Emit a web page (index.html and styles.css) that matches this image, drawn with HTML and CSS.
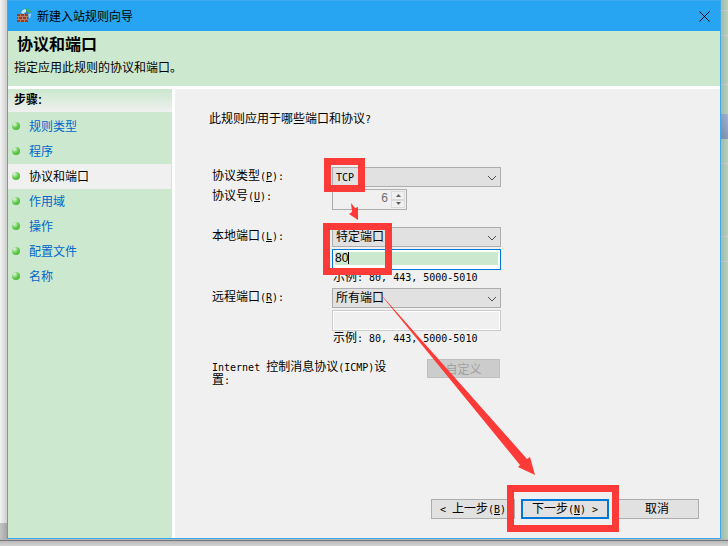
FILE: index.html
```html
<!DOCTYPE html>
<html lang="zh-CN">
<head>
<meta charset="utf-8">
<title>新建入站规则向导</title>
<link rel="stylesheet" href="styles.css">
</head>
<body>
<div class="desktop">
  <div class="edge edge-left"></div>
  <main class="window">
    <header class="titlebar">
      <svg class="app-icon" viewBox="0 0 16 16" aria-hidden="true">
        <circle cx="10" cy="6" r="5.500" fill="#2a7fd0"/>
        <path d="M5 5 Q6 1 10 1 L10 4 L7 6Z" fill="#c4ecff"/>
        <path d="M9 1 Q13 0 15 4 L13 5 L11 3Z" fill="#49b845"/>
        <path d="M12 6 15 5 Q16 8 13 11Z" fill="#7fd0f5"/>
        <path d="M1 6H12V14H1Z" fill="#8f3f2e"/>
        <path d="M1 8.500H12M1 11.500H12M4.500 6V8M8.500 6V8M2.500 9V11M6.500 9V11M10.500 9V11M4.500 12V14M8.500 12V14" stroke="#c98a72" stroke-width=".8" fill="none"/>
      </svg>
      <span class="title">新建入站规则向导</span>
      <button class="close" type="button" aria-label="关闭">
        <svg viewBox="0 0 11 11" aria-hidden="true"><path d="M.5.5 10.500 10.500M10.500.5.5 10.500"/></svg>
      </button>
    </header>
    <section class="banner">
      <h1>协议和端口</h1>
      <p>指定应用此规则的协议和端口。</p>
    </section>
    <div class="body">
      <nav class="steps">
        <h2>步骤:</h2>
        <ul>
          <li><a href="#type">规则类型</a></li>
          <li><a href="#program">程序</a></li>
          <li class="current"><a href="#ports" aria-current="step">协议和端口</a></li>
          <li><a href="#scope">作用域</a></li>
          <li><a href="#action">操作</a></li>
          <li><a href="#profile">配置文件</a></li>
          <li><a href="#name">名称</a></li>
        </ul>
      </nav>
      <form class="page">
        <p class="question">此规则应用于哪些端口和协议<span class="en">?</span></p>
        <div class="group protocol">
          <label for="protocol">协议类型<span class="en">(<u>P</u>):</span></label>
          <div class="pick"><select id="protocol" class="latin"><option>TCP</option></select><svg viewBox="0 0 10 6" aria-hidden="true"><path d="M1 1 5 5 9 1"/></svg></div>
          <label for="number">协议号<span class="en">(<u>U</u>):</span></label>
          <div class="spinner">
            <input id="number" type="text" value="6" disabled>
            <div class="arrows">
              <button type="button" disabled aria-label="增加"><svg viewBox="0 0 5 3" aria-hidden="true"><path d="M0 3 2.500 0 5 3Z"/></svg></button>
              <button type="button" disabled aria-label="减少"><svg viewBox="0 0 5 3" aria-hidden="true"><path d="M0 0 2.500 3 5 0Z"/></svg></button>
            </div>
          </div>
        </div>
        <div class="group local">
          <label for="local">本地端口<span class="en">(<u>L</u>):</span></label>
          <div class="pick"><select id="local"><option>特定端口</option></select><svg viewBox="0 0 10 6" aria-hidden="true"><path d="M1 1 5 5 9 1"/></svg></div>
          <div class="field active"><input type="text" value="80" size="1" aria-label="本地端口号"></div>
          <p class="hint">示例<span class="en">: 80, 443, 5000-5010</span></p>
        </div>
        <div class="group remote">
          <label for="remote">远程端口<span class="en">(<u>R</u>):</span></label>
          <div class="pick"><select id="remote"><option>所有端口</option></select><svg viewBox="0 0 10 6" aria-hidden="true"><path d="M1 1 5 5 9 1"/></svg></div>
          <div class="field off"><input type="text" size="1" disabled aria-label="远程端口号"></div>
          <p class="hint">示例<span class="en">: 80, 443, 5000-5010</span></p>
        </div>
        <div class="icmp">
          <p><span class="en">Internet </span>控制消息协议<span class="en">(ICMP)</span>设置<span class="en">:</span></p>
          <button type="button" disabled>自定义</button>
        </div>
        <footer class="actions">
          <button type="button"><span class="en">&lt; </span>上一步<span class="en">(<u>B</u>)</span></button>
          <button type="button" class="default">下一步<span class="en">(<u>N</u>) &gt;</span></button>
          <button type="button">取消</button>
        </footer>
      </form>
    </div>
  </main>
  <div class="edge edge-right"></div>
  <div class="edge-bottom"></div>
  <svg class="marks" width="728" height="546" viewBox="0 0 728 546" aria-hidden="true">
    <g fill="none" stroke="#fc3a38" stroke-width="7">
      <rect x="327.500" y="161.500" width="34" height="27"/>
      <rect x="326.500" y="226.500" width="62" height="45"/>
      <rect x="510.500" y="488.500" width="105" height="40"/>
    </g>
    <g fill="#fc3a38">
      <path d="M351 203 355 208 358 207 358 220 349 214 352 212Z"/>
      <path d="M377 290 527 459 530 457 535 475 518 467 520 465Z"/>
    </g>
  </svg>
</div>
</body>
</html>
```
FILE: styles.css
```css
* { box-sizing: border-box; }
body, h1, h2, p, ul { margin: 0; padding: 0; }
body, button, input, select {
  font-family: "Liberation Sans", "Noto Sans CJK SC", sans-serif;
  font-size: 12px;
  color: #000;
}
.en, .pick .latin { font-family: "DejaVu Sans Mono", monospace; font-size: 10px; }
.en { white-space: pre-wrap; }
u { text-underline-offset: 1px; }

.desktop {
  position: relative;
  display: grid;
  grid-template-columns: 7px minmax(0, 1fr) 7px;
  grid-template-rows: 1fr 7px;
  min-height: 100vh;
  overflow: hidden;
}
.edge-left {
  background:
    linear-gradient(90deg, transparent, rgba(0, 0, 0, .16)),
    linear-gradient(#f4f4f4 523px, #c4c4c4 523px, #c4c4c4 538px);
}
.edge-right {
  background:
    linear-gradient(90deg, rgba(0, 0, 0, .2), rgba(0, 0, 0, .1)),
    linear-gradient(#cce8cf 10px, #efe6ef 10px 11px, #cce8cf 11px 35px, #efe6ef 35px 36px, #cce8cf 36px 84px, #efe6ef 84px 85px, #cce8cf 85px 114px, #b4c8ea 114px, #98acd0 139px, #cce8cf 139px 163px, #efe6ef 163px 164px, #cce8cf 164px 236px, #efe6ef 236px 237px, #cce8cf 237px 261px, #efe6ef 261px 262px, #cce8cf 262px);
}
.edge-bottom {
  grid-column: 1 / -1;
  background: linear-gradient(#b4b4b4 1px, #737780 1px 2px, #b9b9b9 2px, #d4d4d4);
}

.window {
  display: flex;
  flex-direction: column;
  border: 1px solid #3ba9ec;
  background: #f0f0f0;
}
.titlebar {
  display: flex;
  align-items: center;
  height: 30px;
  padding: 0 10px 0 8px;
  background: #27a4f2;
}
.app-icon { width: 16px; height: 16px; margin-right: 5px; }
.title { flex: 1; padding-bottom: 2px; }
.close { display: flex; padding: 0; border: 0; background: none; }
.close svg { width: 11px; height: 11px; fill: none; stroke: #000; }
.banner {
  height: 58px;
  padding: 4px 6px;
  background: #cce8cf;
  border-bottom: 3px solid #fff;
}
h1 { padding-left: 3px; font-size: 16px; line-height: 20px; }
.banner p { margin-top: 4px; line-height: 18px; }
.body { flex: 1; display: flex; }
.steps {
  flex: 0 0 167px;
  padding-top: 1px;
  background: #cce8cf;
  border-right: 3px solid #fff;
}
h2 {
  height: 22px;
  margin-bottom: 2px;
  padding-left: 6px;
  font-size: 12px;
  line-height: 20px;
  background: linear-gradient(#cce8cf, #f0f0f0);
}
.steps ul { list-style: none; }
.steps li { display: flex; align-items: center; height: 25px; padding: 0 0 2px 4px; }
.steps li::before {
  content: "";
  width: 8px;
  height: 8px;
  margin-right: 9px;
  border-radius: 50%;
  background: radial-gradient(circle at 30% 25%, #e8f5e6, #62c84c 50%, #38b027);
}
.steps a { color: #0066cc; text-decoration: none; }
.steps .current { margin-right: 1px; background: #f0f0f0; }
.steps .current a { color: #000; }

.page {
  flex: 1;
  display: flex;
  flex-direction: column;
  min-width: 0;
  padding: 21px 21px 19px 37px;
}
.question { margin: 0 0 38px -3px; line-height: 18px; }
.group {
  display: grid;
  grid-template-columns: 120px 169px;
  row-gap: 2px;
}
.group label { line-height: 18px; }
.protocol label:nth-of-type(2) { line-height: 14px; }
.protocol { margin-bottom: 17px; }
.pick { position: relative; height: 20px; }
.pick select {
  display: block;
  width: 100%;
  height: 20px;
  padding: 0 3px;
  appearance: none;
  border: 1px solid #adadad;
  border-radius: 0;
  background: #e1e1e1;
}
.pick svg {
  position: absolute;
  right: 4px;
  top: 8px;
  width: 10px;
  height: 6px;
  fill: none;
  stroke: #505050;
  pointer-events: none;
}
.spinner {
  display: flex;
  width: 75px;
  height: 21px;
  padding: 1px;
  border: 1px solid #adadad;
}
.spinner input {
  flex: 1;
  min-width: 0;
  height: 14px;
  padding: 0 3px;
  border: 0;
  background: none;
  text-align: right;
  color: #6d6d6d;
}
.arrows { display: flex; flex-direction: column; width: 14px; }
.arrows button {
  flex: 1;
  display: flex;
  align-items: center;
  justify-content: center;
  padding: 0;
  border: 1px solid #dadada;
  background: #f0f0f0;
}
.arrows svg { width: 5px; height: 3px; fill: #606060; }
.field {
  position: relative;
  grid-column: 2;
  height: 21px;
  padding: 2px;
  border: 1px solid #ccc;
}
.field input {
  display: block;
  width: 100%;
  height: 13px;
  padding: 0;
  border: 0;
  background: #cce8cf;
  line-height: 13px;
}
.active { border-color: #0078d7; background: #fff; }
.active::after {
  content: "";
  position: absolute;
  left: 15px;
  top: 2px;
  width: 1px;
  height: 12px;
  background: #000;
}
.off { padding: 1px; background: #fff; }
.off input { height: 17px; background: #f0f0f0; }
.hint { grid-column: 2; padding-left: 1px; line-height: 14px; }
.group .hint { margin-top: -2px; }
.local { margin-bottom: 3px; }
.icmp {
  display: grid;
  grid-template-columns: 184px 73px;
  column-gap: 31px;
  margin-top: 13px;
}
.icmp p { padding-top: 2px; line-height: 12px; }
.icmp button {
  height: 19px;
  padding: 0;
  border: 1px solid #bfbfbf;
  background: #ccc;
  color: #a0a0a0;
}
.actions { display: flex; justify-content: flex-end; gap: 6px; margin-top: auto; }
.actions button {
  width: 84px;
  height: 20px;
  padding: 0;
  border: 1px solid #adadad;
  background: #e1e1e1;
  white-space: nowrap;
  line-height: 16px;
}
.actions .default { width: 88px; border: 2px solid #0078d7; }
.marks { position: absolute; left: 0; top: 0; pointer-events: none; }
```
